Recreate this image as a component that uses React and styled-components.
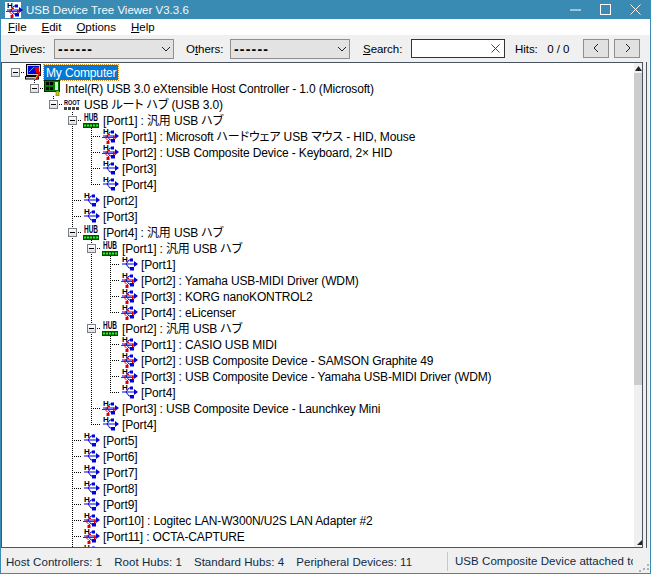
import styled, { createGlobalStyle } from 'styled-components';

const GlobalStyle = createGlobalStyle`
    html, body {
        margin: 0;
        padding: 0;
        background: #fff;
    }
`

const Window = styled.div`
    width: 651px;
    height: 574px;
    box-sizing: border-box;
    display: flex;
    flex-direction: column;
    border: 1px solid #3a8bb3;
    border-top: none;
    background: #f0f0f0;
    font-family: "Liberation Sans", "Noto Sans CJK JP", sans-serif;
    font-size: 11.5px;
    color: #000;
    overflow: hidden;
`

const TitleBar = styled.div`
    height: 19px;
    flex: none;
    display: flex;
    align-items: center;
    background: #3a8bb3;
    color: #fff;
    padding-left: 4px;
`

const AppIcon = styled.div`
    width: 16px;
    height: 16px;
    flex: none;
    background: #fff;
`

const TitleText = styled.span`
    margin-left: 5px;
    color: #f4fafc;
`

const WinButtons = styled.div`
    margin-left: auto;
    display: flex;
    align-items: center;
`

const WinButton = styled.div`
    width: 30px;
    height: 18px;
    display: flex;
    align-items: center;
    justify-content: center;
`

const MenuBar = styled.div`
    height: 16px;
    flex: none;
    display: flex;
    align-items: center;
    background: #fff;
    padding-left: 7px;
    gap: 15px;
`

const MenuItem = styled.span`
    u { text-underline-offset: 1px; }
`

const Toolbar = styled.div`
    height: 27px;
    flex: none;
    display: flex;
    align-items: center;
    padding-left: 9px;
    background: #f0f0f0;
`

const Label = styled.span`
    width: ${p => p.$width}px;
    margin-left: ${p => p.$left || 0}px;
    flex: none;
    white-space: nowrap;
    letter-spacing: -0.05px;
    u { text-underline-offset: 1px; }
`

const Combo = styled.div`
    width: 120px;
    height: 20px;
    flex: none;
    box-sizing: border-box;
    display: flex;
    align-items: center;
    justify-content: space-between;
    padding: 0 3px;
    border: 1px solid #8f8f8f;
    background: #e3e3e3;
    font-size: 14px;
    font-weight: bold;
    letter-spacing: 1.2px;
`

const SearchBox = styled.div`
    width: 94px;
    height: 19px;
    flex: none;
    box-sizing: border-box;
    margin-left: 10px;
    display: flex;
    align-items: center;
    justify-content: flex-end;
    padding-right: 4px;
    border: 1px solid #333;
    background: #fff;
`

const NavButton = styled.div`
    width: 26px;
    height: 19px;
    flex: none;
    box-sizing: border-box;
    margin-left: ${p => p.$gap || 0}px;
    display: flex;
    align-items: center;
    justify-content: center;
    border: 1px solid #8f8f8f;
    background: #e1e1e1;
`

const Body = styled.div`
    flex: 1;
    min-height: 0;
    display: flex;
    padding-right: 3px;
`

const TreeFrame = styled.div`
    flex: 1;
    min-width: 0;
    display: flex;
    border: 1px solid #4a5560;
    background: #fff;
`

const Splitter = styled.div`
    width: 1px;
    margin-left: 3px;
    background: #555;
`

const Tree = styled.div`
    flex: 1;
    min-width: 0;
    overflow: hidden;
    padding-top: 1px;
    background: #fff;
`

const Row = styled.div`
    height: 16px;
    display: flex;
    padding-left: 4px;
    white-space: nowrap;
`

const dotsV = 'repeating-linear-gradient(to bottom, #000 0 1px, transparent 1px 2px)';
const dotsH = 'repeating-linear-gradient(to right, #000 0 1px, transparent 1px 2px)';

const Guide = styled.div`
    width: 19px;
    flex: none;
    background: ${p => p.$on ? `${dotsV} 9px 0 / 1px 100% no-repeat` : 'none'};
`

const Connector = styled.div`
    width: 19px;
    flex: none;
    display: flex;
    align-items: center;
    padding-left: 5px;
    box-sizing: border-box;
    background:
        ${dotsH} 9px 8px / 10px 1px no-repeat
        ${p => p.$up ? `, ${dotsV} 9px 0 / 1px ${p.$down ? 16 : 9}px no-repeat` : ''};
`

const Expander = styled.div`
    width: 9px;
    height: 9px;
    box-sizing: border-box;
    border: 1px solid #7b7f85;
    background: linear-gradient(#fff, #dcdfe6);
    display: flex;
    align-items: center;
    justify-content: center;
    &::after {
        content: "";
        width: 5px;
        height: 1px;
        background: #000;
    }
`

const IconBox = styled.div`
    width: 18px;
    height: 16px;
    flex: none;
    margin-right: 1px;
`

const Name = styled.span`
    font-size: 12px;
    line-height: 16px;
    height: 15px;
    margin-top: 1px;
    padding: 0 2px;
    letter-spacing: -0.14px;
    ${p => p.$selected ? `
        background: #0078d7;
        color: #fff;
        outline: 1px dotted #d28a1e;
    ` : ''}
`

const Kana = styled.span`
    font-feature-settings: "palt";
`

const Scrollbar = styled.div`
    width: 8px;
    flex: none;
    display: flex;
    flex-direction: column;
    background: #f0f0f0;
`

const ArrowCell = styled.div`
    height: 10px;
    flex: none;
    display: flex;
    align-items: center;
    justify-content: center;
`

const Thumb = styled.div`
    height: 312px;
    flex: none;
    background: #cdcdcd;
`

const Track = styled.div`
    flex: 1;
`

const StatusBar = styled.div`
    height: 24px;
    flex: none;
    display: flex;
    align-items: center;
    padding: 1px 0 0 5px;
    margin-top: 1px;
    box-sizing: border-box;
    background: #f0f0f0;
    position: relative;
    letter-spacing: 0.05px;
    color: #0f2a45;
`

const StatusLeft = styled.div`
    width: 441px;
    flex: none;
    display: flex;
    gap: 12px;
    white-space: nowrap;
`

const StatusRight = styled.div`
    width: 186px;
    height: 19px;
    flex: none;
    line-height: 19px;
    overflow: hidden;
    white-space: nowrap;
    box-sizing: border-box;
    padding-left: 7px;
    border-left: 1px solid #c8c8c8;
`

const Grip = styled.svg`
    position: absolute;
    right: 1px;
    bottom: 1px;
`

const ComputerIcon = () => (
    <svg width="18" height="16" viewBox="0 0 18 16">
        <rect x="1.5" y="0.5" width="14" height="11" fill="#c8c8c8" stroke="#000" />
        <rect x="3" y="2" width="11" height="8" fill="#0000e0" />
        <path d="M9 3l5 0 0 6-3 0z" fill="#e00000" />
        <path d="M4 8l5-5" stroke="#00c8c8" />
        <rect x="0.5" y="12.5" width="13" height="2.5" fill="#c8c8c8" stroke="#000" />
        <path d="M11 16l4-8" stroke="#e00000" strokeWidth="2" />
        <path d="M10 15l3-5" stroke="#e8c800" />
    </svg>
);

const CardIcon = () => (
    <svg width="18" height="16" viewBox="0 0 18 16">
        <rect x="0.5" y="0.5" width="15" height="11" fill="#008000" stroke="#003000" />
        <rect x="2" y="2" width="3" height="3" fill="#000" />
        <rect x="6" y="2" width="3" height="3" fill="#000" />
        <rect x="2" y="7" width="3" height="3" fill="#000" />
        <rect x="6" y="7" width="3" height="3" fill="#000" />
        <rect x="11" y="2" width="3" height="8" fill="#c8f0c8" />
        <rect x="12" y="11" width="3" height="5" fill="#d8c800" stroke="#444" strokeWidth="0.5" />
    </svg>
);

const RootIcon = () => (
    <svg width="18" height="16" viewBox="0 0 18 16">
        <text x="1" y="9" fontFamily="Liberation Sans" fontSize="8" fontWeight="bold" textLength="16" lengthAdjust="spacingAndGlyphs" fill="#000030">ROOT</text>
        <path d="M1 12.5h16" stroke="#444" strokeWidth="3" strokeDasharray="3 1" />
    </svg>
);

const HubIcon = () => (
    <svg width="18" height="16" viewBox="0 0 18 16">
        <text x="2" y="9" fontFamily="Liberation Sans" fontSize="10" fontWeight="bold" textLength="14" lengthAdjust="spacingAndGlyphs" fill="#000030">HUB</text>
        <rect x="1" y="11" width="16" height="5" fill="#005000" />
        <path d="M2 13.5h14" stroke="#20ff20" strokeWidth="2" strokeDasharray="2 1" />
    </svg>
);

const UsbIcon = ({ red }) => (
    <svg width="18" height="16" viewBox="0 0 18 16">
        <text x="2" y="6" fontFamily="Liberation Sans" fontSize="8" fontWeight="bold" fill="#000">H</text>
        <path d="M2 8h12M6 8l3-4h2M6 8l3 4h1" fill="none" stroke="#0000e0" />
        <path d="M14 5l4 3-4 3z" fill="#0000e0" />
        <rect x="10" y="2.5" width="3" height="3" fill="#0000e0" />
        <rect x="10" y="11" width="4" height="3.5" fill="#0000e0" />
        {red && <>
            <path d="M1 9.5h12M4 9.5l3-3h2M4 9.5l3 3h1" fill="none" stroke="#e00000" />
            <path d="M12 7.5l3 2-3 2z" fill="#e00000" />
            <rect x="5.5" y="13" width="3" height="3" fill="#e00000" />
        </>}
    </svg>
);

const icons = {
    pc: <ComputerIcon />,
    card: <CardIcon />,
    root: <RootIcon />,
    hub: <HubIcon />,
    usb: <UsbIcon />,
    dev: <UsbIcon red />,
};

const rows = [
    [0, 'pc', 'My Computer', true],
    [1, 'card', 'Intel(R) USB 3.0 eXtensible Host Controller - 1.0 (Microsoft)', true],
    [2, 'root', 'USB ルート ハブ (USB 3.0)', true],
    [3, 'hub', '[Port1] : 汎用 USB ハブ', true],
    [4, 'dev', '[Port1] : Microsoft ハードウェア USB マウス - HID, Mouse'],
    [4, 'dev', '[Port2] : USB Composite Device - Keyboard, 2× HID'],
    [4, 'usb', '[Port3]'],
    [4, 'usb', '[Port4]'],
    [3, 'usb', '[Port2]'],
    [3, 'usb', '[Port3]'],
    [3, 'hub', '[Port4] : 汎用 USB ハブ', true],
    [4, 'hub', '[Port1] : 汎用 USB ハブ', true],
    [5, 'usb', '[Port1]'],
    [5, 'dev', '[Port2] : Yamaha USB-MIDI Driver (WDM)'],
    [5, 'dev', '[Port3] : KORG nanoKONTROL2'],
    [5, 'dev', '[Port4] : eLicenser'],
    [4, 'hub', '[Port2] : 汎用 USB ハブ', true],
    [5, 'dev', '[Port1] : CASIO USB MIDI'],
    [5, 'dev', '[Port2] : USB Composite Device - SAMSON Graphite 49'],
    [5, 'dev', '[Port3] : USB Composite Device - Yamaha USB-MIDI Driver (WDM)'],
    [5, 'usb', '[Port4]'],
    [4, 'dev', '[Port3] : USB Composite Device - Launchkey Mini'],
    [4, 'usb', '[Port4]'],
    [3, 'usb', '[Port5]'],
    [3, 'usb', '[Port6]'],
    [3, 'usb', '[Port7]'],
    [3, 'usb', '[Port8]'],
    [3, 'usb', '[Port9]'],
    [3, 'dev', '[Port10] : Logitec LAN-W300N/U2S LAN Adapter #2'],
    [3, 'dev', '[Port11] : OCTA-CAPTURE'],
    [3, 'usb', ''],
];

// a level keeps its line while a later row at that level comes before a shallower one
const continues = (index, level) => {
    for (let i = index + 1; i < rows.length; i++) {
        if (rows[i][0] < level) return false;
        if (rows[i][0] === level) return true;
    }
    return level === 3;
};

// the katakana in this tree sits tighter than the latin text
const splitKana = name =>
    name.split(/([\u3000-\u9fff]+)/).map((part, i) => (i % 2 ? <Kana key={i}>{part}</Kana> : part));

const Chevron = ({ d }) => (
    <svg width="9" height="11" viewBox="0 0 9 11">
        <path d={d} fill="none" stroke="#222" />
    </svg>
);

const App = () => {
    return (
        <Window>
            <GlobalStyle />
            <TitleBar>
                <AppIcon><UsbIcon red /></AppIcon>
                <TitleText>USB Device Tree Viewer V3.3.6</TitleText>
                <WinButtons>
                    <WinButton>
                        <svg width="11" height="11"><path d="M0 6h11" stroke="#fff" /></svg>
                    </WinButton>
                    <WinButton>
                        <svg width="11" height="11"><rect x="0.5" y="0.5" width="10" height="10" fill="none" stroke="#fff" /></svg>
                    </WinButton>
                    <WinButton>
                        <svg width="11" height="11"><path d="M0.5 0.5l10 10M10.5 0.5l-10 10" stroke="#fff" /></svg>
                    </WinButton>
                </WinButtons>
            </TitleBar>
            <MenuBar>
                <MenuItem><u>F</u>ile</MenuItem>
                <MenuItem><u>E</u>dit</MenuItem>
                <MenuItem><u>O</u>ptions</MenuItem>
                <MenuItem><u>H</u>elp</MenuItem>
            </MenuBar>
            <Toolbar>
                <Label $width={44}><u>D</u>rives:</Label>
                <Combo>------<Chevron d="M1 4l4 4 4-4" /></Combo>
                <Label $left={12} $width={44}>O<u>t</u>hers:</Label>
                <Combo>------<Chevron d="M1 4l4 4 4-4" /></Combo>
                <Label $left={13} $width={38}><u>S</u>earch:</Label>
                <SearchBox>
                    <svg width="9" height="9"><path d="M0.5 0.5l8 8M8.5 0.5l-8 8" stroke="#444" /></svg>
                </SearchBox>
                <Label $left={10} $width={68}>Hits:&nbsp;&nbsp;&nbsp;0&nbsp;/&nbsp;0</Label>
                <NavButton><Chevron d="M6 1L2 5l4 4" /></NavButton>
                <NavButton $gap={5}><Chevron d="M3 1l4 4-4 4" /></NavButton>
            </Toolbar>
            <Body>
                <TreeFrame>
                    <Tree>
                        {rows.map(([level, icon, name, open], i) => (
                            <Row key={i}>
                                {Array.from({ length: level }, (_, l) => (
                                    <Guide key={l} $on={continues(i, l)} />
                                ))}
                                <Connector $up={level > 0} $down={level > 0 && continues(i, level)}>
                                    {open && <Expander />}
                                </Connector>
                                <IconBox>{icons[icon]}</IconBox>
                                <Name $selected={i === 0}>{splitKana(name)}</Name>
                            </Row>
                        ))}
                    </Tree>
                    <Scrollbar>
                        <ArrowCell>
                            <svg width="7" height="5"><path d="M3.5 0L7 5H0z" fill="#222" /></svg>
                        </ArrowCell>
                        <Thumb />
                        <Track />
                        <ArrowCell>
                            <svg width="7" height="5"><path d="M7 0v5H2z" fill="#222" /></svg>
                        </ArrowCell>
                    </Scrollbar>
                </TreeFrame>
                <Splitter />
            </Body>
            <StatusBar>
                <StatusLeft>
                    <span>Host Controllers: 1</span>
                    <span>Root Hubs: 1</span>
                    <span>Standard Hubs: 4</span>
                    <span>Peripheral Devices: 11</span>
                </StatusLeft>
                <StatusRight>USB Composite Device attached to</StatusRight>
                <Grip width="10" height="10">
                    <path d="M8 2h2v2H8zM4 6h2v2H4zM8 6h2v2H8zM0 8h2v2H0z" fill="#b0b0b0" />
                </Grip>
            </StatusBar>
        </Window>
    );
};

export default App;
